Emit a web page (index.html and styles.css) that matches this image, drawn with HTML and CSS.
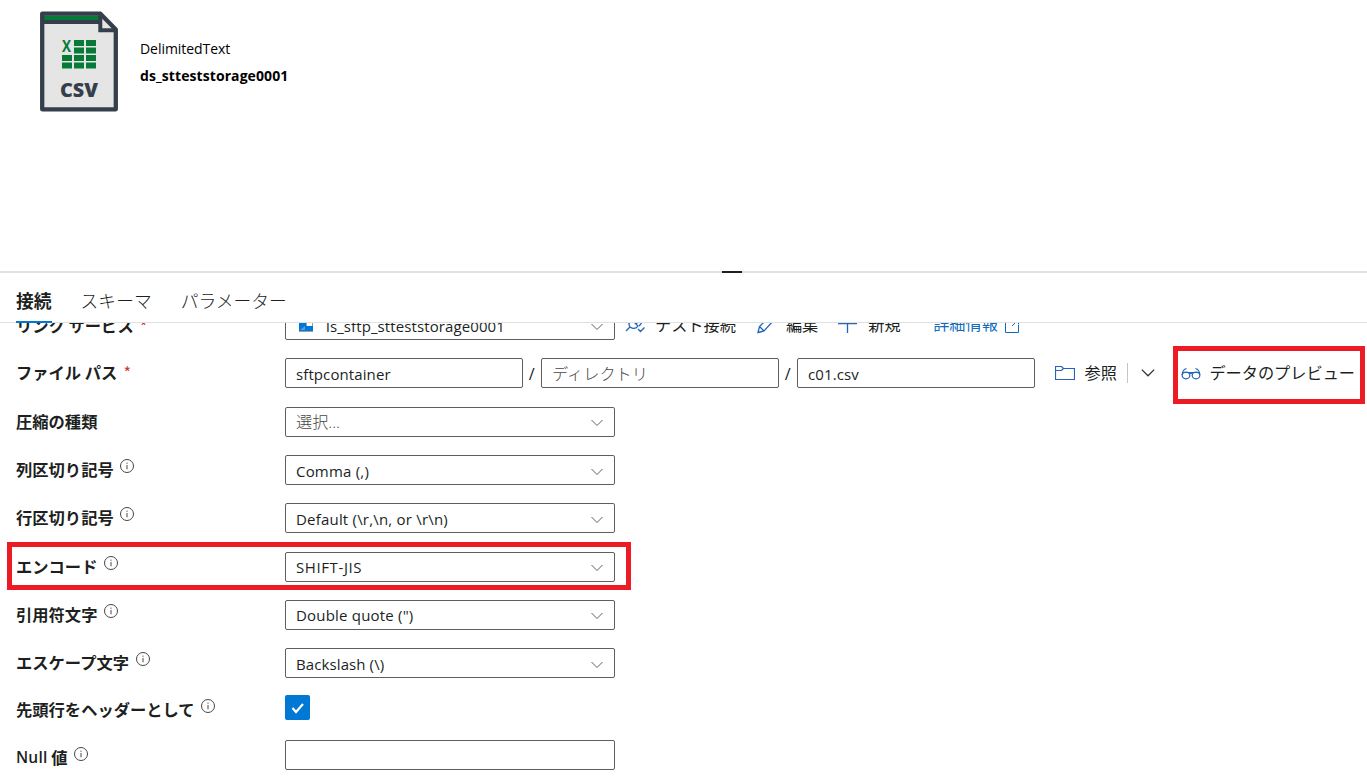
FILE: index.html
```html
<!DOCTYPE html>
<html lang="ja">

<head>
    <meta charset="UTF-8">
    <meta name="viewport" content="width=device-width, initial-scale=1.0">
    <title>ds_stteststorage0001</title>
    <link rel="stylesheet" href="styles.css">
</head>

<body>

    <svg class="symbols">
        <symbol id="chevron" viewBox="0 0 16 16">
            <path d="M2.5 5l5.5 5.5L13.5 5" />
        </symbol>
        <symbol id="info" viewBox="0 0 16 16">
            <circle cx="8" cy="8" r="6.5" />
            <path d="M8 7v4.3M8 4.6v1.2" />
        </symbol>
    </svg>

    <div class="dataset">
        <svg class="csv_icon" viewBox="0 0 78 100">
            <path d="M2 2h58l16 17v79H2z" fill="#e5e5e5" />
            <path d="M3 4h56v5H3z" fill="#067a36" />
            <path d="M3 10.5h56" stroke="#353f4c" stroke-width="4" />
            <path d="M60 4v15h15z" fill="#e5e5e5" />
            <path d="M60.300 3v15.700H76" fill="none" stroke="#353f4c" stroke-width="4" />
            <path d="M2.200 2.200h58.200L75.800 18v79.800H2.200z" fill="none" stroke="#353f4c" stroke-width="4.300" stroke-linejoin="round" />
            <g fill="#067a36">
                <path d="M34 28.500h10v6H34zM46 28.500h10v6H46zM34 36h10v6H34zM46 36h10v6H46zM22 43.500h10v6H22zM34 43.500h10v6H34zM46 43.500h10v6H46zM22 51h10v6H22zM34 51h10v6H34zM46 51h10v6H46z" />
                <text class="csv_x" x="22" y="40.500" textLength="9" lengthAdjust="spacingAndGlyphs">X</text>
            </g>
            <text class="csv_text" x="20" y="85" textLength="38" lengthAdjust="spacingAndGlyphs">CSV</text>
        </svg>
        <div class="dataset_text">
            <p class="dataset_type">DelimitedText</p>
            <p class="dataset_name">ds_stteststorage0001</p>
        </div>
    </div>

    <div class="splitter">
        <div class="splitter_handle"></div>
    </div>

    <div class="tabs">
        <div class="tab active">接続</div>
        <div class="tab">スキーマ</div>
        <div class="tab">パラメーター</div>
    </div>

    <div class="panel">
        <div class="form">

            <div class="row service_row">
                <div class="label">リンク サービス<span class="required">*</span></div>
                <div class="select">
                    <svg class="service_icon" viewBox="0 0 14 14">
                        <path d="M0 0h14v14H0z" fill="#a0a0a0" />
                        <path d="M0 4h7v4h7v5H0z" fill="#0078d4" />
                        <path d="M8 3h5v5H8z" fill="#fff" />
                        <path d="M1 12l5-4v4z" fill="#50a0e8" />
                    </svg>
                    <span class="value service">ls_sftp_stteststorage0001</span>
                    <svg class="chevron"><use href="#chevron" /></svg>
                </div>
                <div class="actions">
                    <svg class="action_icon" viewBox="0 0 20 20">
                        <path d="M1 16l4-4M5 12c-2-3-1-5 2-7l6 6c-2 3-5 3-8 1zM8 6l2-2M11 9l2-2M11 4c2-2 4-2 5 0s1 4-1 6l-1 1M13 14l2.500 2.500 4-4" />
                    </svg>
                    <span class="test">テスト接続</span>
                    <svg class="action_icon" viewBox="0 0 20 20">
                        <path d="M2 17.500l1.500-6L14 1l4 4L8 16zM3.500 11.500L8 16" />
                    </svg>
                    <span class="edit">編集</span>
                    <svg class="action_icon" viewBox="0 0 20 20">
                        <path d="M0 8.500h19M9.500 0v18" />
                    </svg>
                    <span class="new">新規</span>
                    <a class="more">詳細情報</a>
                    <svg class="external_icon" viewBox="0 0 16 16">
                        <path d="M6 1.500H1.500v13h13V7M8 8l6-6M9.500 1.500h5v5" />
                    </svg>
                </div>
            </div>

            <div class="row">
                <div class="label">ファイル パス<span class="required">*</span></div>
                <div class="path">
                    <div class="input"><span class="value container">sftpcontainer</span></div>
                    <span class="slash">/</span>
                    <div class="input"><span class="value placeholder">ディレクトリ</span></div>
                    <span class="slash">/</span>
                    <div class="input"><span class="value file">c01.csv</span></div>
                </div>
                <div class="browse">
                    <svg class="folder_icon" viewBox="0 0 20 16">
                        <path d="M.5 14.500V1.500h6l2 2h11v11zM.5 5.500H6.500l2-2" />
                    </svg>
                    <span>参照</span>
                    <div class="divider"></div>
                    <svg class="browse_chevron"><use href="#chevron" /></svg>
                </div>
                <div class="preview">
                    <svg class="glasses_icon" viewBox="0 0 20 14">
                        <ellipse cx="5" cy="9.500" rx="3.800" ry="3.300" />
                        <ellipse cx="15" cy="9.500" rx="3.800" ry="3.300" />
                        <path d="M8.500 8c.5-1 2.500-1 3 0M1 9C1.500 5 3 3 5.500 2.500M19 9C18.500 5 17 3 14.500 2.500M1 6.500h18" />
                    </svg>
                    <span>データのプレビュー</span>
                </div>
            </div>

            <div class="row">
                <div class="label">圧縮の種類</div>
                <div class="select">
                    <span class="value placeholder">選択...</span>
                    <svg class="chevron"><use href="#chevron" /></svg>
                </div>
            </div>

            <div class="row">
                <div class="label">列区切り記号<svg class="info"><use href="#info" /></svg></div>
                <div class="select">
                    <span class="value comma">Comma (,)</span>
                    <svg class="chevron"><use href="#chevron" /></svg>
                </div>
            </div>

            <div class="row">
                <div class="label">行区切り記号<svg class="info"><use href="#info" /></svg></div>
                <div class="select">
                    <span class="value newline">Default (\r,\n, or \r\n)</span>
                    <svg class="chevron"><use href="#chevron" /></svg>
                </div>
            </div>

            <div class="row marked">
                <div class="label">エンコード<svg class="info"><use href="#info" /></svg></div>
                <div class="select">
                    <span class="value encoding">SHIFT-JIS</span>
                    <svg class="chevron"><use href="#chevron" /></svg>
                </div>
            </div>

            <div class="row">
                <div class="label">引用符文字<svg class="info"><use href="#info" /></svg></div>
                <div class="select">
                    <span class="value quote">Double quote (")</span>
                    <svg class="chevron"><use href="#chevron" /></svg>
                </div>
            </div>

            <div class="row">
                <div class="label">エスケープ文字<svg class="info"><use href="#info" /></svg></div>
                <div class="select">
                    <span class="value escape">Backslash (\)</span>
                    <svg class="chevron"><use href="#chevron" /></svg>
                </div>
            </div>

            <div class="row header_row">
                <div class="label">先頭行をヘッダーとして<svg class="info"><use href="#info" /></svg></div>
                <div class="checkbox">
                    <svg viewBox="0 0 25 25">
                        <path d="M7.500 13l3.500 4 7-8" />
                    </svg>
                </div>
            </div>

            <div class="row null_row">
                <div class="label"><span class="null">Null</span> 値<svg class="info"><use href="#info" /></svg></div>
                <div class="select"></div>
            </div>

        </div>
    </div>

</body>

</html>
```
FILE: styles.css
```css
*,
*::after {
    box-sizing: border-box;
}

body {
    font-family: "Open Sans", "Noto Sans CJK JP", sans-serif;
    font-size: 16.2px;
    line-height: 24px;
    color: #201f1e;
    background-color: #fff;
    margin: 0;
    height: 778px;
    display: flex;
    flex-direction: column;
    overflow: hidden;
}

svg {
    display: block;
    flex: none;
    fill: none;
}

.symbols {
    position: absolute;
    width: 0;
    height: 0;
}

/* dataset header */
.dataset {
    height: 271px;
    flex: none;
    display: flex;
    align-items: flex-start;
    padding: 11px 0 0 40px;
    color: #000;
}

.csv_icon {
    width: 78px;
    height: 101px;
}

.csv_x {
    font-size: 16px;
    font-weight: 700;
}

.csv_text {
    font-size: 20px;
    font-weight: 800;
    fill: #353f4c;
}

.dataset_text {
    margin: 24px 0 0 22px;
}

.dataset_text p {
    margin: 0;
    height: 27px;
    line-height: 27px;
    white-space: nowrap;
}

.dataset_type {
    font-size: 14px;
    letter-spacing: -0.05px;
}

.dataset_name {
    font-size: 14px;
    font-weight: 700;
    letter-spacing: 0.08px;
}

.splitter {
    height: 2px;
    flex: none;
    background-color: #e1e1e1;
    padding-left: 722px;
}

.splitter_handle {
    width: 20px;
    height: 2px;
    background-color: #201f1e;
}

/* tabs */
.tabs {
    height: 50px;
    flex: none;
    display: flex;
    gap: 29px;
    padding: 7px 0 0 16px;
    border-bottom: 1px solid #e1e1e1;
    font-size: 17.8px;
}

.tab {
    position: relative;
    z-index: 1;
    height: 43px;
    line-height: 42px;
    font-weight: 300;
}

.tab.active {
    font-weight: 700;
    border-bottom: 2px solid #0078d4;
}

/* form, scrolled a little under the tabs */
.panel {
    flex: 1;
    overflow: hidden;
}

.form {
    margin-top: -22px;
    padding-left: 16px;
}

.row {
    position: relative;
    height: 48.3px;
    display: flex;
    align-items: center;
    white-space: nowrap;
}

.label {
    width: 269px;
    flex: none;
    display: flex;
    align-items: center;
    padding-bottom: 2px;
    font-weight: 600;
    font-size: 16.3px;
    white-space: pre;
    font-family: "Noto Sans CJK JP", sans-serif;
}

.service_row .label {
    padding-bottom: 0;
}

.required {
    color: #c8383a;
    font-weight: 400;
    margin-left: 6px;
}

.service_row .required {
    padding-top: 2px;
}

.info {
    width: 16px;
    height: 16px;
    margin: -6px 0 0 5.5px;
    stroke: #484644;
    stroke-width: 1;
}

.null {
    font-family: "Open Sans", sans-serif;
    font-size: 15.5px;
    font-weight: 600;
    letter-spacing: 0.2px;
}

.select,
.input {
    height: 30px;
    display: flex;
    align-items: center;
    border: 1px solid #605e5c;
    border-radius: 2px;
    padding-left: 10px;
}

.select {
    width: 330px;
}

.service_row .select {
    height: 29px;
}

.value {
    font-size: 15px;
    padding-top: 1px;
    letter-spacing: 0.1px;
}

.comma,
.newline,
.quote {
    letter-spacing: 0.2px;
}

.encoding {
    letter-spacing: 0.6px;
}

.placeholder {
    font-size: 16.2px;
    font-weight: 300;
    color: #484644;
    letter-spacing: 0;
}

.chevron {
    width: 16px;
    height: 16px;
    margin: 3px 9px 0 auto;
    stroke: #605e5c;
    stroke-width: 1;
}

.service_icon {
    width: 14px;
    height: 14px;
    margin: 0 13px 0 3px;
}

.actions {
    display: flex;
    align-items: center;
    padding-left: 10px;
}

.action_icon {
    width: 20px;
    height: 20px;
    margin-right: 10px;
    stroke: #2266bb;
    stroke-width: 1.3;
}

.test,
.edit {
    margin-right: 20px;
}

.more {
    margin: -2px 6px 0 32.5px;
    color: #0f6cbd;
}

.external_icon {
    width: 16px;
    height: 16px;
    margin-top: 2px;
    stroke: #0f6cbd;
}

.path {
    display: flex;
    align-items: center;
}

.path .input {
    width: 237.5px;
}

.slash {
    width: 18.5px;
    padding-top: 2px;
    text-align: center;
}

.browse {
    display: flex;
    align-items: center;
    padding-left: 20px;
}

.folder_icon {
    width: 20px;
    height: 16px;
    margin-right: 10px;
    stroke: #2266bb;
    stroke-width: 1.2;
}

.divider {
    width: 1px;
    height: 20px;
    margin: 0 11px 0 10.5px;
    background-color: #c8c6c4;
}

.browse_chevron {
    width: 18px;
    height: 18px;
    stroke: #323130;
    stroke-width: 1.1;
}

.preview {
    position: relative;
    display: flex;
    align-items: center;
    margin-left: 24px;
}

.glasses_icon {
    width: 20px;
    height: 14px;
    margin-right: 8px;
    stroke: #2266bb;
    stroke-width: 1.2;
}

/* red marker frames */
.preview::after,
.marked::after {
    content: "";
    position: absolute;
    border: 5px solid #ed1c24;
}

.preview::after {
    left: -8px;
    top: -15px;
    width: 192px;
    height: 58px;
}

.marked::after {
    left: -9px;
    top: 0;
    width: 624px;
    height: 48px;
}

.checkbox {
    width: 25px;
    height: 25px;
    border-radius: 2px;
    background-color: #0078d4;
}

.checkbox svg {
    stroke: #fff;
    stroke-width: 2.2;
}

.header_row {
    height: 47px;
    margin-top: -3px;
}

.null_row {
    height: 48px;
}

/* keep the label text on the row grid */
.header_row .label {
    padding: 2px 0 0;
}

.null_row .label {
    padding: 3px 0 0;
}
```
